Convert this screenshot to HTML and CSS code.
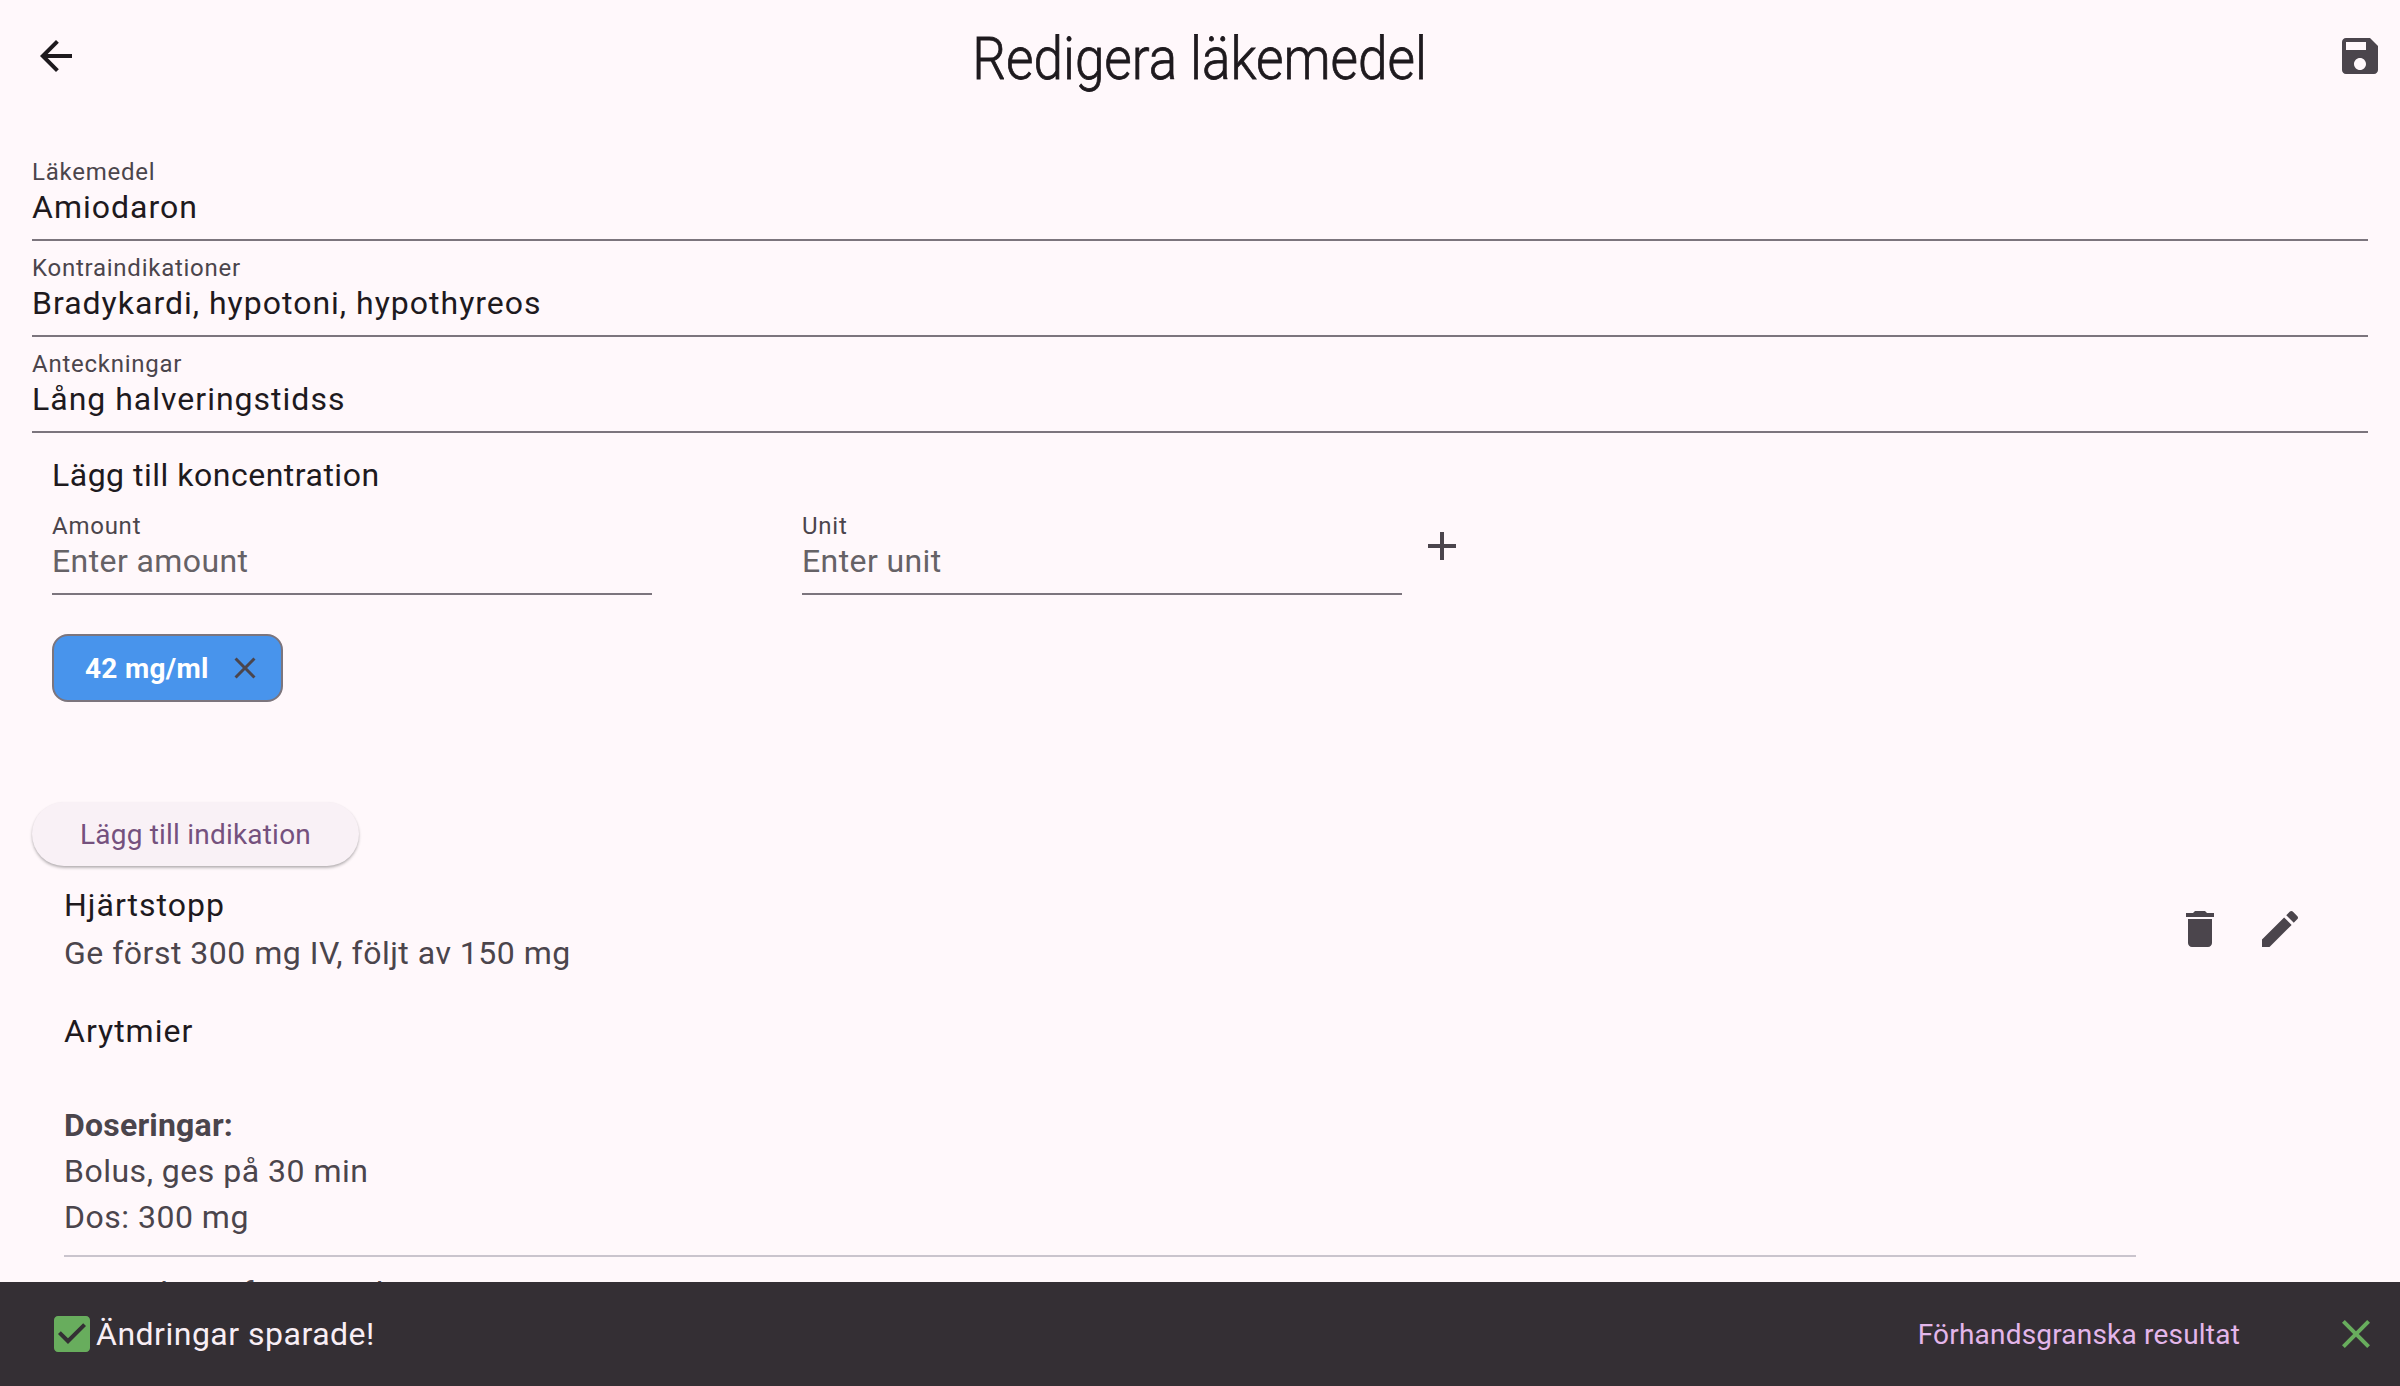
FILE: index.html
```
<!DOCTYPE html>
<html lang="sv">
<head>
<meta charset="utf-8">
<title>Redigera läkemedel</title>
<link rel="stylesheet" href="styles.css">
</head>
<body>
<div class="app">
  <header class="appbar">
    <svg class="icon back" viewBox="0 0 24 24"><path d="M20 11H7.83l5.59-5.59L12 4l-8 8 8 8 1.41-1.41L7.83 13H20v-2z"/></svg>
    <h1 class="title">Redigera läkemedel</h1>
    <svg class="icon" viewBox="0 0 24 24"><path d="M17 3H5c-1.11 0-2 .9-2 2v14c0 1.1.89 2 2 2h14c1.1 0 2-.9 2-2V7l-4-4zm-5 16c-1.66 0-3-1.34-3-3s1.34-3 3-3 3 1.34 3 3-1.34 3-3 3zm3-10H5V5h10v4z"/></svg>
  </header>
  <main class="content">
    <div class="field"><span class="label">Läkemedel</span><span class="value">Amiodaron</span></div>
    <div class="field"><span class="label">Kontraindikationer</span><span class="value">Bradykardi, hypotoni, hypothyreos</span></div>
    <div class="field"><span class="label">Anteckningar</span><span class="value">Lång halveringstidss</span></div>
    <section class="concentration">
      <h2 class="subtitle">Lägg till koncentration</h2>
      <div class="inputs">
        <div class="field small"><span class="label">Amount</span><span class="value hint">Enter amount</span></div>
        <div class="field small"><span class="label">Unit</span><span class="value hint">Enter unit</span></div>
        <svg class="icon add" viewBox="0 0 24 24"><path d="M19 13h-6v6h-2v-6H5v-2h6V5h2v6h6v2z"/></svg>
      </div>
      <div class="chip"><span>42 mg/ml</span><svg class="chip-close" viewBox="0 0 24 24"><path d="M19 6.41L17.59 5 12 10.59 6.41 5 5 6.41 10.59 12 5 17.59 6.41 19 12 13.41 17.59 19 19 17.59 13.41 12z"/></svg></div>
    </section>
    <button class="button">Lägg till indikation</button>
    <section class="indication">
      <div class="texts">
        <p class="name">Hjärtstopp</p>
        <p class="desc">Ge först 300 mg IV, följt av 150 mg</p>
      </div>
      <div class="actions">
        <svg class="icon" viewBox="0 0 24 24"><path d="M6 19c0 1.1.9 2 2 2h8c1.1 0 2-.9 2-2V7H6v12zM19 4h-3.5l-1-1h-5l-1 1H5v2h14V4z"/></svg>
        <svg class="icon" viewBox="0 0 24 24"><path d="M3 17.25V21h3.75L17.81 9.94l-3.75-3.75L3 17.25zM20.71 7.04c.39-.39.39-1.02 0-1.41l-2.34-2.34c-.39-.39-1.02-.39-1.41 0l-1.83 1.83 3.75 3.75 1.83-1.83z"/></svg>
      </div>
    </section>
    <section class="doses">
      <p class="name">Arytmier</p>
      <div class="dose">
        <p class="bold">Doseringar:</p>
        <p>Bolus, ges på 30 min</p>
        <p>Dos: 300 mg</p>
      </div>
      <p class="dose-next">Ge sedan infusion i dropp</p>
    </section>
  </main>
  <footer class="snackbar">
    <svg class="icon check" viewBox="0 0 24 24"><path d="M19 3H5c-1.11 0-2 .9-2 2v14c0 1.1.89 2 2 2h14c1.11 0 2-.9 2-2V5c0-1.1-.89-2-2-2zm-9 14l-5-5 1.41-1.41L10 14.17l7.59-7.59L19 8l-9 9z"/></svg>
    <span class="message">Ändringar sparade!</span>
    <span class="preview">Förhandsgranska resultat</span>
    <svg class="icon check" viewBox="0 0 24 24"><path d="M19 6.41L17.59 5 12 10.59 6.41 5 5 6.41 10.59 12 5 17.59 6.41 19 12 13.41 17.59 19 19 17.59 13.41 12z"/></svg>
  </footer>
</div>
</body>
</html>
```
FILE: styles.css
```
* { box-sizing: border-box; }
body { margin: 0; background: #fff8fb; font-family: Roboto, "Liberation Sans", sans-serif; color: #1e1a1e; font-size: 32px; letter-spacing: 1px; }
h1, h2, p { margin: 0; font-weight: 400; }
.app { width: 2400px; height: 1386px; display: flex; flex-direction: column; overflow: hidden; }
.icon { width: 48px; height: 48px; fill: #4b454c; flex: none; display: block; }
.appbar { height: 112px; padding: 0 16px 0 32px; display: flex; align-items: center; justify-content: space-between; flex: none; }
.back { fill: #1e1a1e; }
.title { font-size: 59px; font-weight: 300; line-height: 70px; letter-spacing: 0; white-space: nowrap; transform: translate(-8px, 3px) scaleX(.9); -webkit-text-stroke: .8px #1e1a1e; }
.content { flex: 1; min-height: 0; overflow: hidden; padding: 33px 32px 0; }
.field { height: 96px; border-bottom: 2px solid #7c757d; padding-top: 13px; display: flex; flex-direction: column; }
.label { font-size: 24px; line-height: 28px; letter-spacing: .75px; color: #4b454c; }
.value { line-height: 48px; margin-top: -3px; }
.hint { color: #666266; letter-spacing: .4px; }
.concentration { padding: 18px 20px 0; }
.subtitle { font-size: 32px; line-height: 48px; letter-spacing: .5px; }
.inputs { display: flex; }
.small { width: 600px; margin-right: 150px; }
.small + .small { margin-right: 0; }
.add { margin: 23px 0 0 16px; }
.chip { margin-top: 39px; width: 231px; height: 68px; border: 2px solid #7c757d; border-radius: 16px; background: #4894ec; color: #fff; font-size: 28px; font-weight: 700; letter-spacing: .3px; display: flex; align-items: center; padding: 0 18px 0 31px; justify-content: space-between; }
.chip-close { width: 36px; height: 36px; fill: #4b454c; }
.button { display: block; margin-top: 100px; width: 327px; height: 64px; padding: 0; border: 0; border-radius: 32px; background: #f9f1f6; color: #75517e; font: 400 28px/66px Roboto, sans-serif; letter-spacing: .2px; box-shadow: 0 2px 3px rgba(0,0,0,.25), 0 1px 2px rgba(0,0,0,.06); }
.indication { padding: 15px 64px 0 32px; height: 127px; display: flex; justify-content: space-between; }
.name, .desc { line-height: 48px; }
.desc, .doses { color: #4b454c; letter-spacing: .5px; }
.desc { letter-spacing: .5px; }
.actions { display: flex; gap: 32px; padding-top: 24px; }
.doses { padding-left: 32px; width: 2104px; }
.doses .name { color: #1e1a1e; line-height: 76px; letter-spacing: 1px; }
.dose { border-bottom: 2px solid #cac4cd; line-height: 46px; height: 188px; padding-top: 33px; }
.bold { font-weight: 700; letter-spacing: .2px; }
.dose-next { line-height: 46px; margin-top: 13px; word-spacing: 3px; }
.snackbar { height: 104px; flex: none; background: #342f34; display: flex; align-items: center; padding: 0 20px 0 48px; color: #f8eef5; }
.message { letter-spacing: .5px; }
.preview { margin: 0 92px 0 auto; color: #e3b6ea; font-size: 28px; letter-spacing: .2px; }
.check { fill: #68ad5d; }
```
